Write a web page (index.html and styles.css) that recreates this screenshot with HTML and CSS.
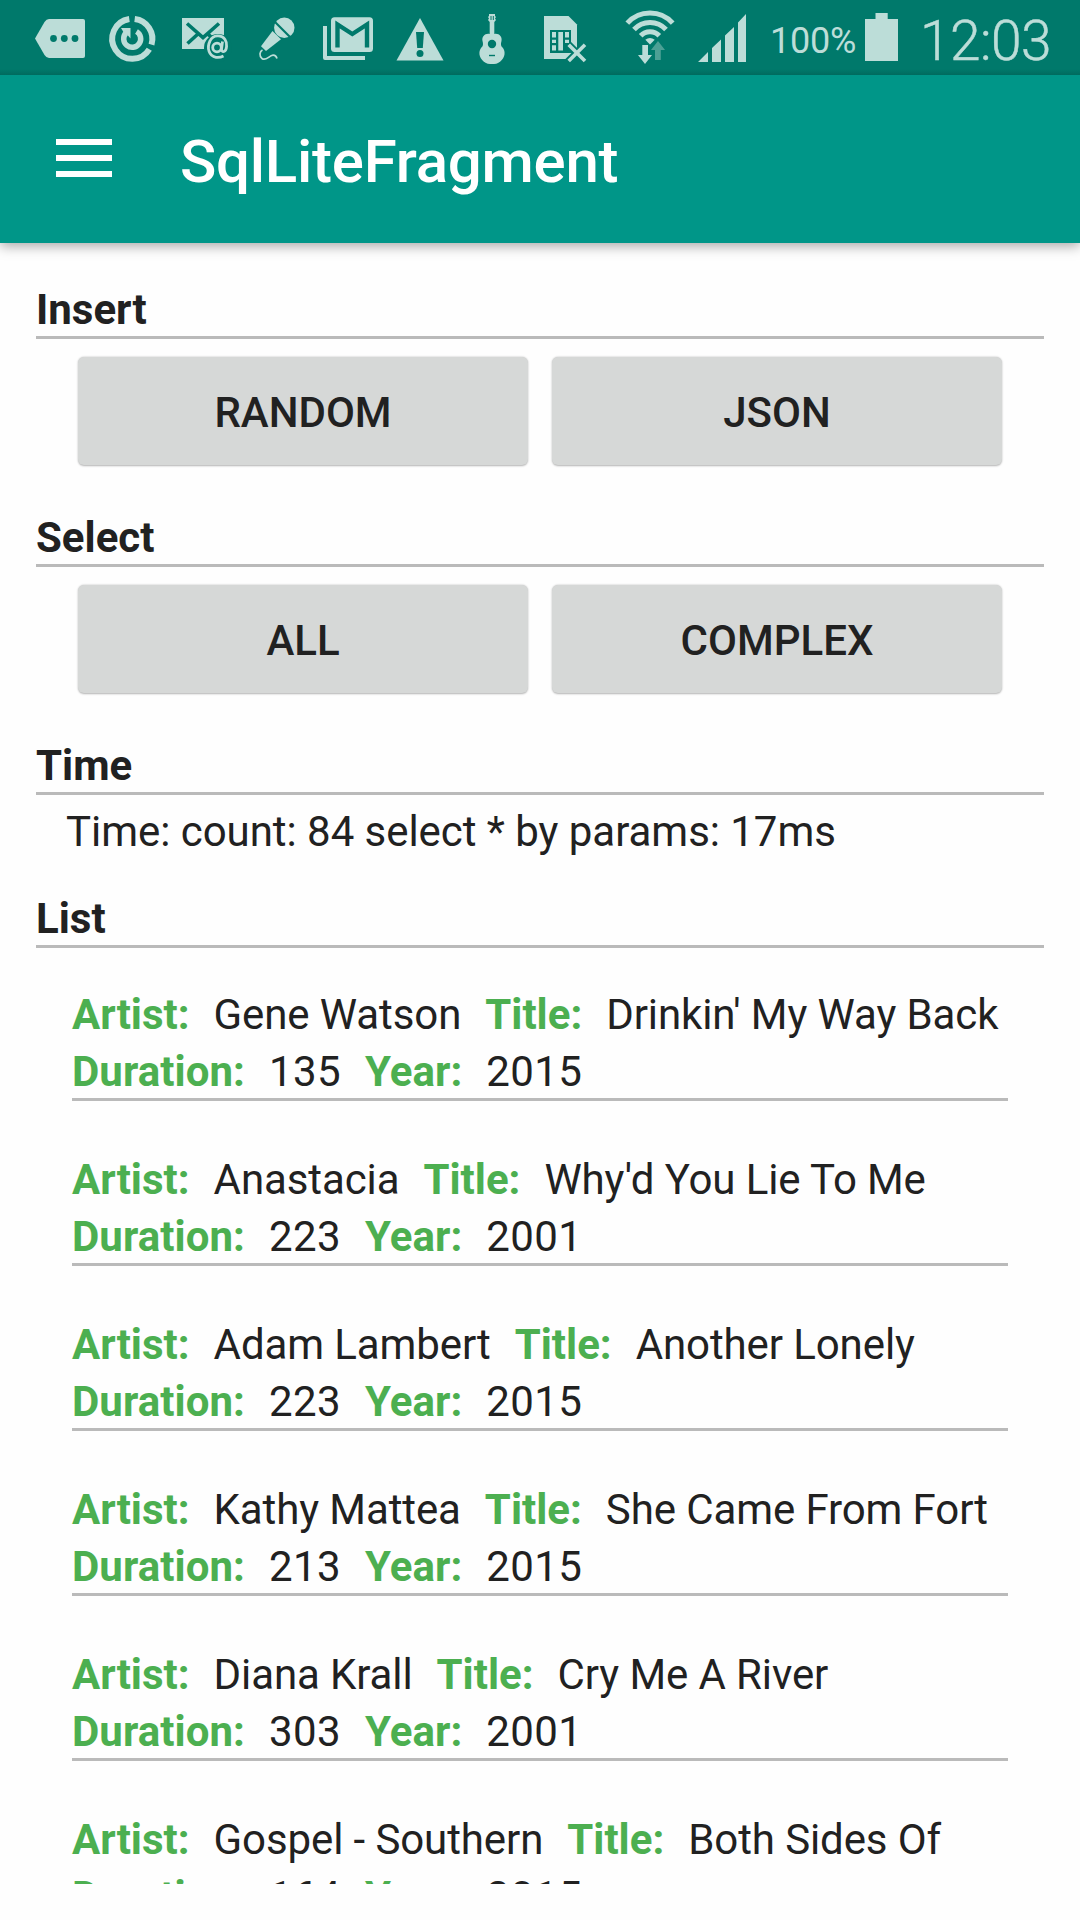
FILE: index.html
```html
<!DOCTYPE html>
<html lang="en">
<head>
<meta charset="utf-8">
<title>SqlLiteFragment</title>
<link rel="stylesheet" href="styles.css">
</head>
<body>
<div class="screen">
  <header class="status-bar">
    <svg class="icon" width="98" height="75" viewBox="0 0 98 75">
      <path d="M35 38.500 44.500 22Q46.500 19 49 19H83Q85 19 85 21V56Q85 58 83 58H49Q46.500 58 44.500 55Z"/>
      <g class="cut"><circle cx="53.500" cy="38.500" r="3.400"/><circle cx="64.300" cy="38.500" r="3.400"/><circle cx="75" cy="38.500" r="3.400"/></g>
    </svg>
    <svg class="icon" width="72" height="75" viewBox="98 0 72 75">
      <path class="line" stroke-width="6" d="M129.300 19A20 20 0 1 0 149.300 49.200M134.700 19A20 20 0 0 1 151.500 44.600"/>
      <path class="line" stroke-width="5.500" d="M136.500 31.500A8.500 8.500 0 1 1 126 33"/>
      <path d="M121 28H130.500V38.500L127.500 35 124 33Z"/>
    </svg>
    <svg class="icon" width="75" height="75" viewBox="170 0 75 75">
      <path d="M182 18H224V49H182Z"/>
      <path class="cut-line" stroke-width="3.600" d="M187 23.500 203 37.500 219 23.500M187.500 43.500 198.500 33.500M207.500 33.500 212 38"/>
      <circle class="cut" cx="218" cy="48" r="14"/>
      <circle class="line" stroke-width="2.800" cx="217" cy="47.500" r="4.300"/>
      <path class="line" stroke-width="2.800" d="M222.500 41.500 221.500 49Q221.500 52 224 51.500C227 50.500 227.500 43 225 39.500C221.500 34.500 213 34.500 210 41C206.500 48 209 56 216 57.300Q220 57.800 223.500 56"/>
    </svg>
    <svg class="icon" width="65" height="75" viewBox="245 0 65 75">
      <circle cx="284.300" cy="27.800" r="10.200"/>
      <path d="M272.500 31 281 39.300 266 51 261 46.200Z"/>
      <path class="cut-line" stroke-width="2.200" d="M274 21 291 38"/>
      <path class="line" stroke-width="1.700" d="M262.500 50C259.500 51.500 259 56 262 58.500C266 61.500 269 55.500 273 55.200Q276 55 277 58.500"/>
    </svg>
    <svg class="icon" width="75" height="75" viewBox="310 0 75 75">
      <path d="M323 26H327V56H365V60H325Q323 60 323 58Z"/>
      <rect x="331" y="17.300" width="42" height="34.700" rx="3.500"/>
      <path class="cut-line" stroke-width="4.400" d="M337.500 47.500V24.500L352.300 34 367 24.500V47.500"/>
    </svg>
    <svg class="icon" width="75" height="75" viewBox="385 0 75 75">
      <path d="M420 18 443.500 60.500H396.500Z"/>
      <path class="cut" d="M416 32H424L422.800 48H417.200Z"/><circle class="cut" cx="420" cy="53.400" r="3.500"/>
    </svg>
    <svg class="icon" width="70" height="75" viewBox="460 0 70 75">
      <path d="M489 14H495V16L496 17 495 18.500 496 20 494.300 22V34C499 33 502.500 37 501.500 41C500.500 45 501 46 503 48C506.500 53 504 60 498 63Q496.500 64 494 64H490Q487.500 64 486 63C480 60 477.500 53 481 48C483 46 483.500 45 482.500 41C481.500 37 485 33 489.700 34V22L488 20 489 18.500 488 17 489 16Z"/>
      <path class="cut" d="M489 54.800H495V56.200H489Z"/><circle class="cut" cx="492" cy="44" r="4.200"/>
      <path class="cut-line" stroke-width="1" d="M491 16V20M493.300 16V20"/>
    </svg>
    <svg class="icon" width="76" height="75" viewBox="530 0 76 75">
      <path d="M544 16H568.500L577 24.500V50L567 59H544Z"/>
      <path class="cut" d="M550 30H571V53H550Z"/>
      <path d="M552 32H556V37.500H552ZM552 39.700H556V43H552ZM552 45.300H556V50.500H552ZM558.300 32H563V50.500H558.300ZM565 32H569V37.500H565ZM565 39.700H569V43H565Z"/>
      <path class="cut-line" stroke-width="8" d="M568 44.500 585.500 62M585.500 44.500 568 62"/>
      <path class="line" stroke-width="3.600" d="M568.700 44.700 585 61M585 44.700 568.700 61"/>
    </svg>
    <svg class="icon" width="84" height="75" viewBox="606 0 84 75">
      <path class="line" stroke-width="5" d="M627.300 23.200A30.500 30.500 0 0 1 672.700 23.200M634 29.500A21.700 21.700 0 0 1 666 29.500M640.700 35.800A12.600 12.600 0 0 1 659.300 35.800"/>
      <path d="M650 44.500 645.300 39.800Q650 36 654.700 39.800Z"/>
      <path d="M642.300 45H648V55H652L645 64 638 55H642.300Z"/>
      <path class="dim" d="M658 41 665 50H660.800V60H655V50H651Z"/>
    </svg>
    <svg class="icon" width="80" height="75" viewBox="690 0 80 75">
      <path d="M698 62 708 52V62ZM712 62V48L721 39.500V62ZM725 62V35.500L734 27V62ZM738 62V22.500L746 14V62Z"/>
    </svg>
    <span class="battery-level">100%</span>
    <svg class="icon" width="60" height="75" viewBox="860 0 60 75"><path d="M865 19H875.500V13H887.700V19H898V61H865Z"/></svg>
    <span class="clock">12:03</span>
  </header>

  <div class="toolbar">
    <svg class="menu" width="56" height="38" viewBox="0 0 56 38"><path d="M0 0H56V6H0ZM0 16H56V22H0ZM0 32H56V38H0Z"/></svg>
    <h1 class="title">SqlLiteFragment</h1>
  </div>

  <main class="content">
    <section class="group">
      <h2 class="heading">Insert</h2>
      <div class="buttons"><button class="button">RANDOM</button><button class="button">JSON</button></div>
    </section>
    <section class="group">
      <h2 class="heading">Select</h2>
      <div class="buttons"><button class="button">ALL</button><button class="button">COMPLEX</button></div>
    </section>
    <section class="group time">
      <h2 class="heading">Time</h2>
      <p class="elapsed">Time: count: 84 select * by params: 17ms</p>
    </section>
    <section class="group">
      <h2 class="heading">List</h2>
      <ul class="songs">
        <li class="song">
          <div class="row"><b>Artist:</b><span>Gene Watson</span><b>Title:</b><span>Drinkin' My Way Back</span></div>
          <div class="row numbers"><b>Duration:</b><span>135</span><b>Year:</b><span>2015</span></div>
        </li>
        <li class="song">
          <div class="row"><b>Artist:</b><span>Anastacia</span><b>Title:</b><span>Why'd You Lie To Me</span></div>
          <div class="row numbers"><b>Duration:</b><span>223</span><b>Year:</b><span>2001</span></div>
        </li>
        <li class="song">
          <div class="row"><b>Artist:</b><span>Adam Lambert</span><b>Title:</b><span>Another Lonely</span></div>
          <div class="row numbers"><b>Duration:</b><span>223</span><b>Year:</b><span>2015</span></div>
        </li>
        <li class="song">
          <div class="row"><b>Artist:</b><span>Kathy Mattea</span><b>Title:</b><span>She Came From Fort</span></div>
          <div class="row numbers"><b>Duration:</b><span>213</span><b>Year:</b><span>2015</span></div>
        </li>
        <li class="song">
          <div class="row"><b>Artist:</b><span>Diana Krall</span><b>Title:</b><span>Cry Me A River</span></div>
          <div class="row numbers"><b>Duration:</b><span>303</span><b>Year:</b><span>2001</span></div>
        </li>
        <li class="song">
          <div class="row"><b>Artist:</b><span>Gospel - Southern</span><b>Title:</b><span>Both Sides Of</span></div>
          <div class="row numbers"><b>Duration:</b><span>164</span><b>Year:</b><span>2015</span></div>
        </li>
      </ul>
    </section>
  </main>
</div>
</body>
</html>
```
FILE: styles.css
```css
* { box-sizing: border-box; margin: 0; padding: 0; }

body {
  background: #fefefe;
  color: #212121;
  font: 400 42px/49px Roboto, sans-serif;
}

.screen {
  display: flex;
  flex-direction: column;
  width: 1080px;
  height: 1920px;
  padding-bottom: 36px;
  overflow: hidden;
}

.status-bar {
  display: flex;
  flex: none;
  height: 75px;
  background: linear-gradient(#00796b 69px, #006a5e 75px);
  color: #bcddd8;
}

.icon { display: block; flex: none; fill: #bcddd8; }
.icon .cut { fill: #00796b; }
.icon .cut-line { fill: none; stroke: #00796b; }
.icon .line { fill: none; stroke: #bcddd8; }
.icon .dim { fill: #4ca095; }

.battery-level { width: 90px; font-size: 36px; line-height: 83px; letter-spacing: -0.2px; }
.clock { font-size: 55px; font-weight: 300; line-height: 82px; letter-spacing: -0.5px; -webkit-text-stroke: 0.5px #bcddd8; }

.toolbar {
  display: flex;
  flex: none;
  align-items: center;
  gap: 68px;
  height: 168px;
  padding: 0 56px 2px;
  background: #009688;
  box-shadow: 0 3px 12px rgba(0, 0, 0, 0.35);
  clip-path: inset(0 0 -20px 0);
}

.menu { flex: none; fill: #fff; }
.title {
  padding-top: 7px;
  color: #fff;
  font-size: 60px;
  font-weight: 500;
  line-height: 70px;
  letter-spacing: -0.24px;
}

.content {
  flex: 1;
  min-height: 0;
  padding: 42px 36px 0;
  overflow: hidden;
}

.group { height: 228px; }
.time { height: 153px; }
.heading {
  height: 54px;
  border-bottom: 3px solid #bababa;
  font-size: 42px;
  font-weight: 700;
  line-height: 49px;
}

.buttons { display: flex; gap: 24px; padding: 18px 42px 0; }
.button {
  flex: 1;
  height: 108px;
  padding-top: 2px;
  border: 0;
  border-radius: 6px;
  background: #d6d8d7;
  box-shadow: 0 0.5px 2px rgba(0, 0, 0, 0.3);
  color: #212121;
  font: 500 42px/49px Roboto, sans-serif;
}

.elapsed { padding: 12px 30px 0; letter-spacing: -0.04px; }

.songs { padding: 0 36px; list-style: none; }
.song { height: 165px; padding-top: 54px; border-bottom: 3px solid #bababa; }
.song:first-child { height: 153px; padding-top: 42px; }
.row { display: flex; height: 57px; white-space: nowrap; }
.row b { margin-right: 24px; color: #4caf50; font-weight: 700; }
.row span { margin-right: 24px; letter-spacing: -0.1px; }
.numbers b { letter-spacing: 0.06px; }
.numbers span { letter-spacing: 0.4px; }
```
